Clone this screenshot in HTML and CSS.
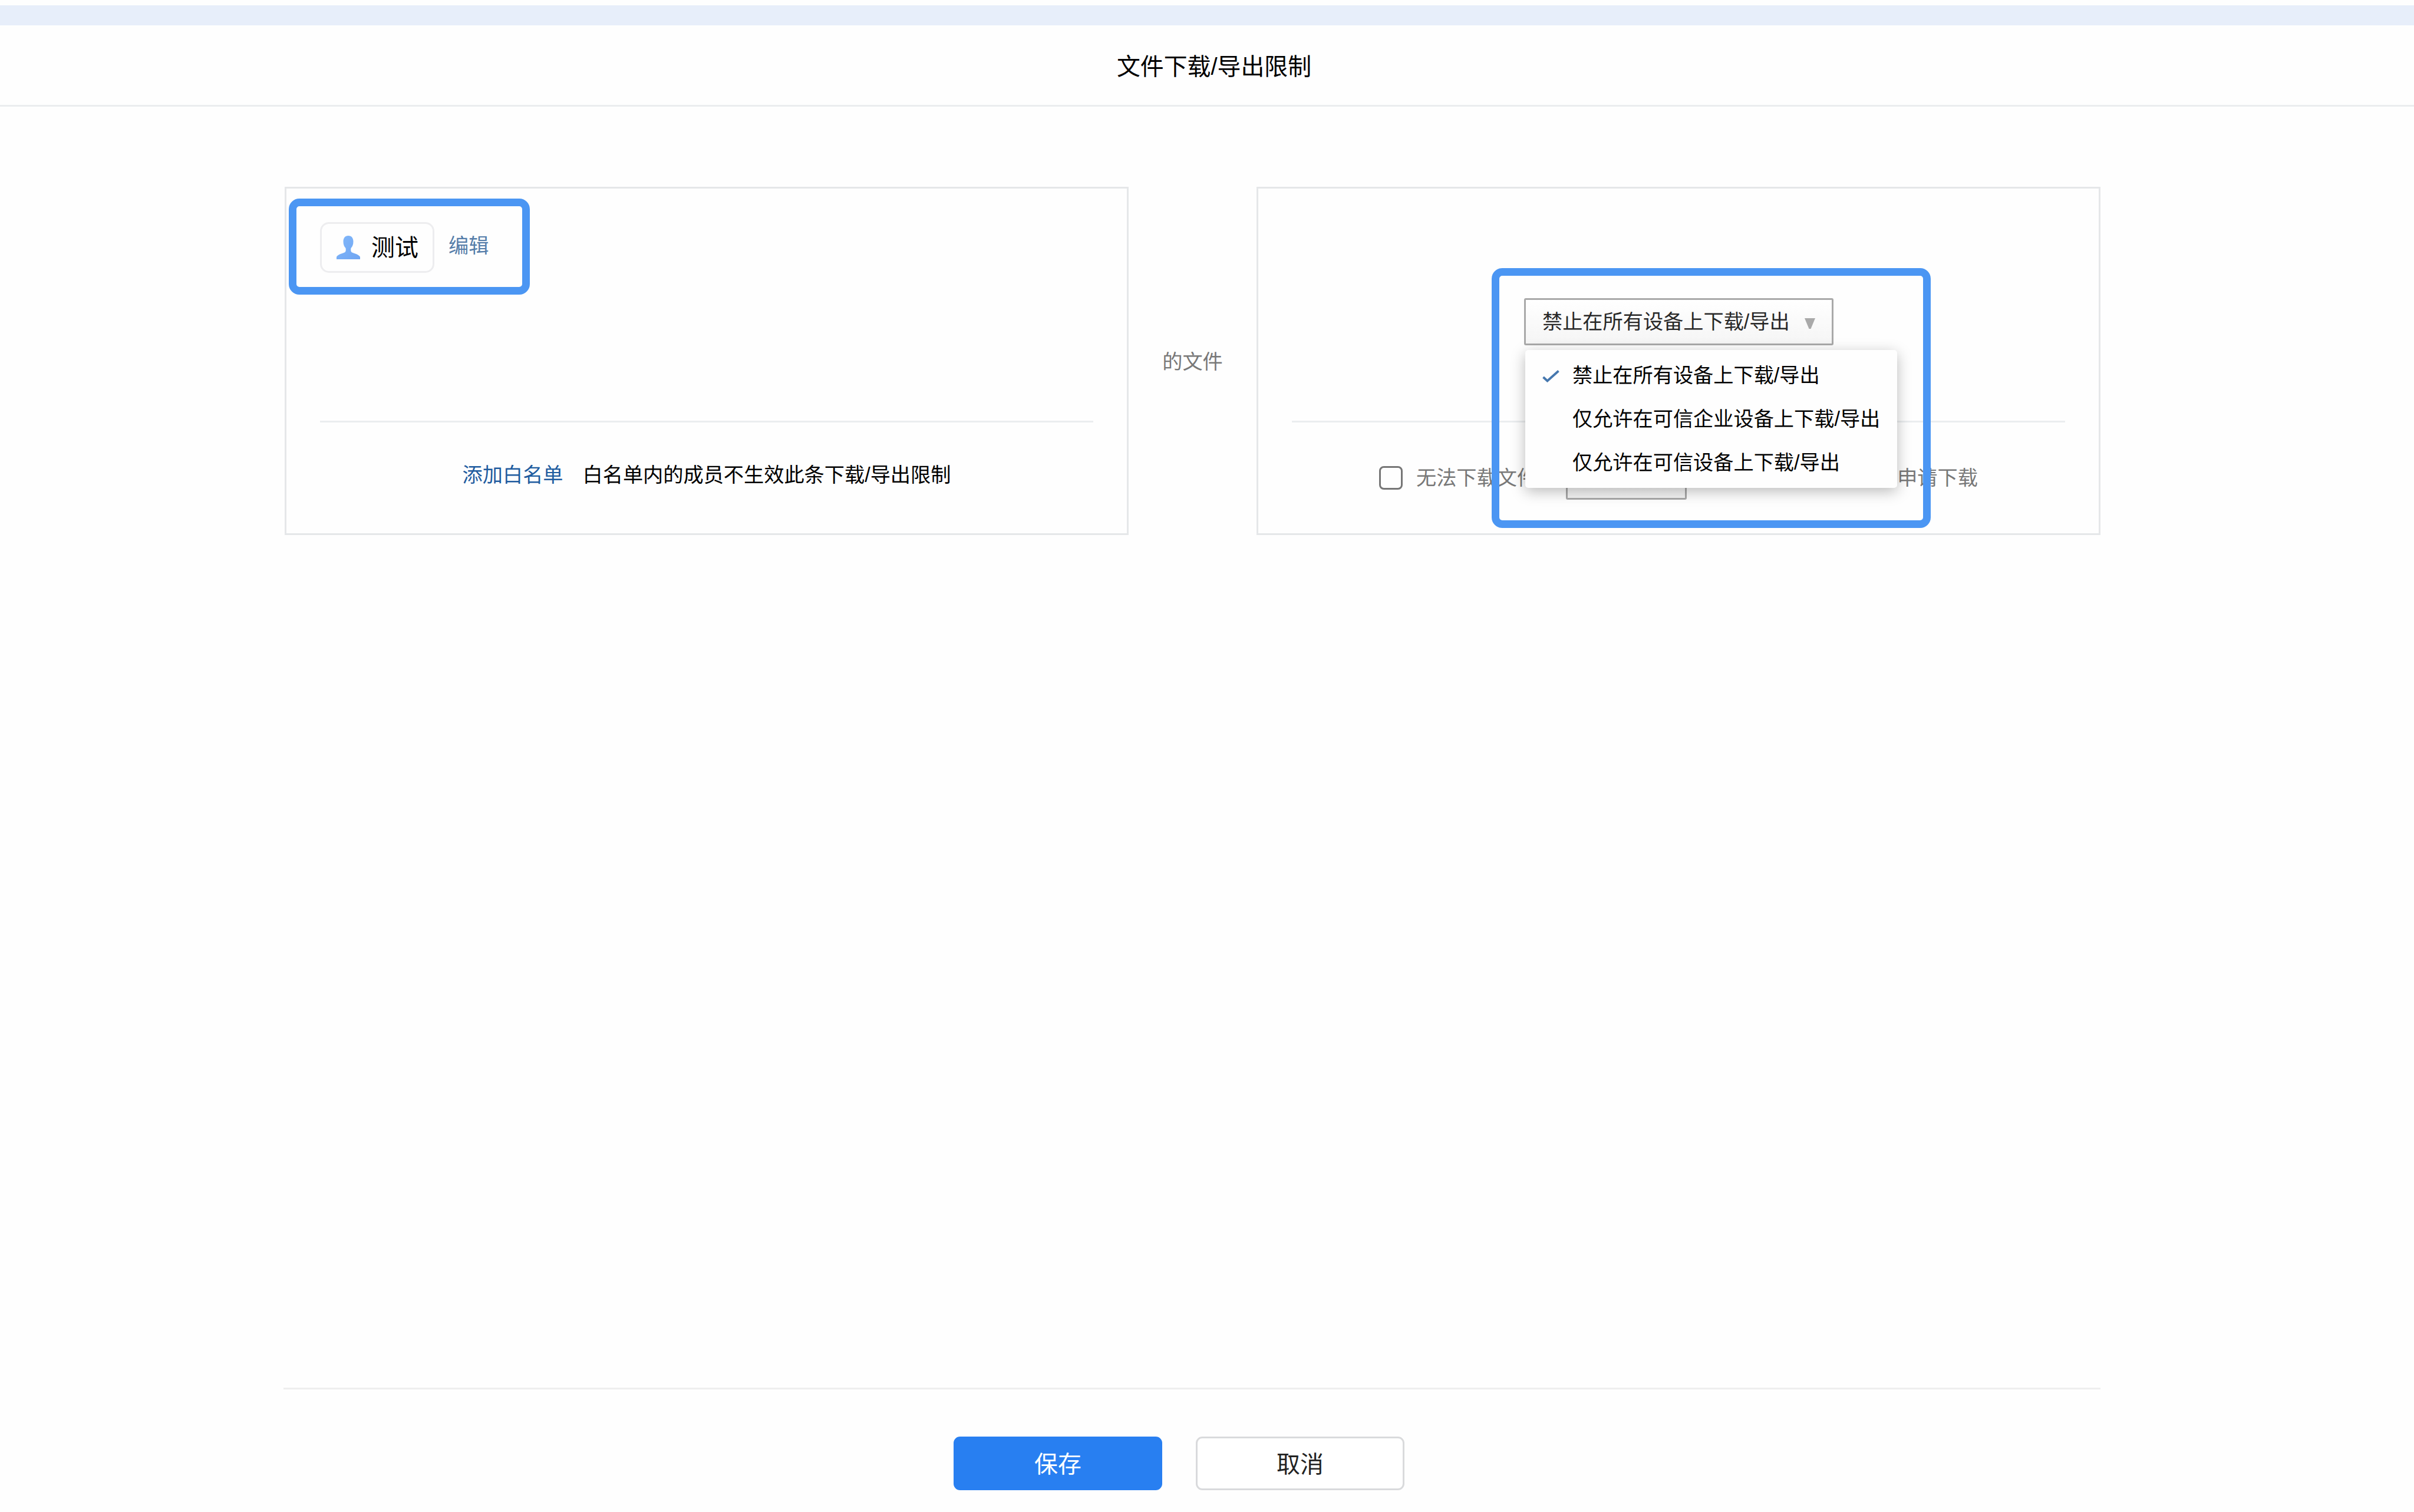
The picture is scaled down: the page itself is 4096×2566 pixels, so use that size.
FILE: index.html
```html
<!DOCTYPE html>
<html lang="zh-CN">
<head>
    <meta charset="UTF-8">
    <meta name="viewport" content="width=device-width, initial-scale=1.0">
    <title>文件下载/导出限制</title>
    <link rel="stylesheet" href="styles.css">
</head>
<body>
    <div class="top-bar"></div>
    <header class="header">
        <h1>文件下载/导出限制</h1>
    </header>

    <main class="rule">
        <section class="card">
            <div class="card-main members">
                <div class="tag">
                    <svg class="tag-icon" viewBox="0 0 40 40">
                        <defs>
                            <linearGradient id="person" x1="0" y1="0" x2="1" y2="1">
                                <stop offset="0" stop-color="#82b8fb"/>
                                <stop offset="1" stop-color="#6fa5f2"/>
                            </linearGradient>
                        </defs>
                        <path fill="url(#person)" d="M20 0C14.500 0 11.500 4 11.500 10C11.500 15 13 18.500 15.500 21C16 24 16 26 14.500 28C11 30 2 31.500 0 36V40H40V36C38 31.500 29 30 25.500 28C24 26 24 24 24.500 21C27 18.500 28.500 15 28.500 10C28.500 4 25.500 0 20 0Z"/>
                    </svg>
                    <span>测试</span>
                </div>
                <a class="edit" href="#">编辑</a>
            </div>
            <div class="card-foot whitelist">
                <a href="#">添加白名单</a>
                <span>白名单内的成员不生效此条下载/导出限制</span>
            </div>
            <div class="highlight highlight-members"></div>
        </section>

        <div class="joiner">的文件</div>

        <section class="card">
            <div class="card-main limit">
                <div class="select">
                    <span>禁止在所有设备上下载/导出</span>
                    <svg class="arrow" viewBox="0 0 18 18"><path d="M0 0H18L10.500 18H7.500Z" fill="#a9a9a9"/></svg>
                    <ul class="menu">
                        <li>
                            <svg class="check" viewBox="0 0 29 21"><path d="M1.500 12L8.500 18.500L27.500 1.500" fill="none" stroke="#4577ae" stroke-width="3.800"/></svg>
                            禁止在所有设备上下载/导出
                        </li>
                        <li>仅允许在可信企业设备上下载/导出</li>
                        <li>仅允许在可信设备上下载/导出</li>
                    </ul>
                </div>
            </div>
            <div class="card-foot apply">
                <span class="checkbox"></span>
                <span class="apply-label">无法下载文件</span>
                <span class="select-small"></span>
                <span class="apply-end">申请下载</span>
            </div>
            <div class="highlight highlight-limit"></div>
        </section>
    </main>

    <footer class="footer">
        <button class="btn btn-primary">保存</button>
        <button class="btn">取消</button>
    </footer>
</body>
</html>
```

FILE: styles.css
```css
* {
    box-sizing: border-box;
}
body {
    margin: 0;
    height: 2566px;
    padding-top: 9px;
    display: flex;
    flex-direction: column;
    overflow: hidden;
    background-color: #fefefe;
    color: #000;
    font-family: "Liberation Sans", "Noto Sans CJK SC", sans-serif;
    font-size: 34.2px;
    line-height: 50px;
    white-space: nowrap;
}
a {
    color: #1f5c9f;
    text-decoration: none;
}
.top-bar {
    height: 34px;
    background-color: #e7eefa;
}
.header {
    height: 138px;
    padding: 4px 0 0 24px;
    border-bottom: 3px solid #ebedef;
    display: flex;
    align-items: center;
    justify-content: center;
}
h1 {
    margin: 0;
    font-size: 39.9px;
    font-weight: 400;
}
.rule {
    width: 3081px;
    height: 591px;
    margin: 136px 0 0 483px;
    display: flex;
    justify-content: space-between;
    align-items: stretch;
}
.card {
    position: relative;
    width: 1432px;
    padding: 0 57px;
    border: 3px solid #e5e7e9;
    display: flex;
    flex-direction: column;
}
.card-main {
    height: 397px;
    border-bottom: 3px solid #ebedef;
    display: flex;
}
.card-foot {
    flex: 1;
    display: flex;
    align-items: center;
}
.joiner {
    align-self: center;
    padding-top: 3px;
    color: #787878;
}

/* left card */
.members {
    padding-top: 57px;
    align-items: flex-start;
}
.tag {
    width: 194px;
    height: 86px;
    padding: 0 25px;
    border: 3px solid #ededef;
    border-radius: 15px;
    display: flex;
    align-items: center;
    gap: 19px;
    font-size: 39.9px;
}
.tag-icon {
    width: 40px;
    height: 40px;
    flex: none;
}
.edit {
    margin: 15px 0 0 24px;
    color: #557da9;
}
.whitelist {
    justify-content: center;
    gap: 33px;
    padding-bottom: 11px;
}

/* right card */
.limit {
    padding: 186px 0 0 394px;
}
.select {
    position: relative;
    width: 525px;
    height: 80px;
    padding: 0 28px 0 28px;
    border: 3px solid #a9a9a9;
    border-radius: 3px;
    background: linear-gradient(#fff, #f5f5f5);
    color: #282828;
    display: flex;
    align-items: center;
    justify-content: space-between;
}
.arrow {
    width: 18px;
    height: 18px;
    margin-top: 6px;
}
.menu {
    position: absolute;
    z-index: 1;
    top: 85px;
    left: -1px;
    width: 631px;
    height: 234px;
    margin: 0;
    padding: 6px 0;
    list-style: none;
    background-color: #fefefe;
    border-radius: 5px;
    box-shadow: 0 6px 24px rgba(0, 0, 0, 0.27);
    color: #000;
}
.menu li {
    position: relative;
    height: 74px;
    padding-left: 80px;
    line-height: 74px;
}
.check {
    position: absolute;
    left: 29px;
    top: 28px;
    width: 29px;
    height: 21px;
}
.apply {
    padding: 0 0 6px 148px;
    color: #787878;
}
.checkbox {
    width: 40px;
    height: 40px;
    margin-top: 6px;
    border: 3px solid #767676;
    border-radius: 8px;
}
.apply-label {
    margin: 6px 0 0 23px;
}
.select-small {
    width: 205px;
    height: 80px;
    margin-left: 49px;
    border: 3px solid #a9a9a9;
    border-radius: 3px;
    background: linear-gradient(#fff, #f5f5f5);
}
.apply-end {
    margin: 6px 0 0 357px;
}

/* frames drawn over the cards */
.highlight {
    position: absolute;
    z-index: 2;
    border: 13px solid #4b96f3;
    border-radius: 18px;
}
.highlight-members {
    left: 4px;
    top: 17px;
    width: 409px;
    height: 163px;
}
.highlight-limit {
    left: 396px;
    top: 135px;
    width: 745px;
    height: 441px;
}

.footer {
    width: 3083px;
    margin: auto 0 0 481px;
    height: 211px;
    padding: 80px 0 0 1137px;
    border-top: 3px solid #eee;
    display: flex;
    align-items: flex-start;
    gap: 57px;
}
.btn {
    width: 354px;
    height: 91px;
    padding: 2px 0 0;
    border: 3px solid #d9dadc;
    border-radius: 11px;
    background-color: #fff;
    color: #222;
    font-family: inherit;
    font-size: 39.9px;
    line-height: 60px;
}
.btn-primary {
    border-color: #287ff1;
    background-color: #287ff1;
    color: #fff;
}
```
